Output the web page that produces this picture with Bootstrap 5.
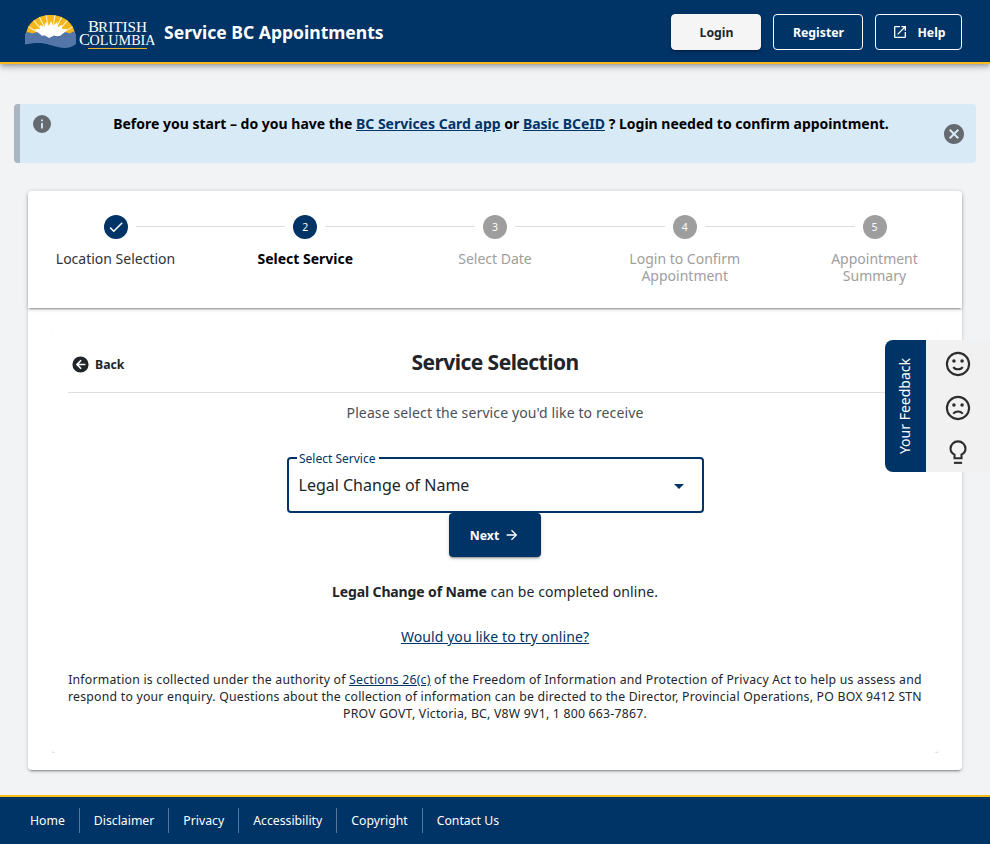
<!DOCTYPE html>
<html lang="en">
<head>
<meta charset="utf-8">
<meta name="viewport" content="width=device-width, initial-scale=1">
<title>Service BC Appointments</title>
<link rel="stylesheet" href="https://cdn.jsdelivr.net/npm/bootstrap@5.3.0/dist/css/bootstrap.min.css">
<style>
:root{--navy:#003366;--gold:#fcba19}
body{font-family:"Noto Sans",sans-serif;background:#f1f3f5;color:#212529;min-height:844px;font-size:14px}
svg{display:block;flex:none}
.top-bar{height:64px;background:var(--navy);border-bottom:2px solid var(--gold);box-shadow:0 2px 4px -1px rgba(0,0,0,.2),0 4px 5px rgba(0,0,0,.14),0 1px 10px rgba(0,0,0,.12);padding:2px 28px 0 25px}
.app-name{font-size:17.55px;font-weight:700;line-height:24px;color:#fff;white-space:nowrap;margin-left:9px}
.top-actions{gap:12px}
.top-btn{height:36px;font-size:12.25px;font-weight:700;border-radius:4px;padding:1px 0 0 1px;display:flex;align-items:center;justify-content:center;color:#fff;border:1px solid #fff;width:90px;line-height:18px}
.top-btn:hover{color:#fff}
.btn-login{background:#f5f5f5;color:#212529;border-color:#f5f5f5;box-shadow:0 3px 1px -2px rgba(0,0,0,.2),0 2px 2px rgba(0,0,0,.14),0 1px 5px rgba(0,0,0,.12)}
.btn-help{width:87px}
.btn-help svg{margin:-1px 9px 0 0}
.notice{margin:40px 14px 0;height:59px;background:#d9eaf7;border:0;border-left:6px solid #a9b5c1;border-radius:4px;padding:10px 12px 0 13px;color:#000;font-weight:700}
.notice-text{line-height:20px;font-size:14px;white-space:nowrap;text-align:center;padding-left:7px}
.info-icon{margin-top:1px}
.close-icon{margin-top:10px}
a,.notice a{color:var(--navy)}
.main-card{margin:28px 28px 0;height:579px;border:0;border-radius:4px;background:#fff;box-shadow:0 3px 1px -2px rgba(0,0,0,.2),0 2px 2px rgba(0,0,0,.14),0 1px 5px rgba(0,0,0,.12)}
.steps{height:117px;flex:none;border-radius:4px 4px 0 0;box-shadow:0 3px 1px -2px rgba(0,0,0,.2),0 2px 2px rgba(0,0,0,.14),0 1px 5px rgba(0,0,0,.12)}
.step{width:175px;padding-top:24px;flex:none;color:#9e9e9e;text-align:center}
.step-dot{width:24px;height:24px;border-radius:50%;background:#9e9e9e;color:#fff;font-size:10.5px;line-height:24px}
.step.done .step-dot,.step.active .step-dot{background:var(--navy)}
.step-label{margin-top:11px;line-height:17px;font-size:14px}
.step.done{color:#303336}
.step.active{color:#000}
.step.active .step-label{font-weight:700}
.step-line{height:1px;background:#dedede;margin:35px -67.5px 0;flex:1 1 0}
.pane{margin:24px 24px 0;height:422px;overflow:hidden}
.inner{height:421px;border-radius:4px;padding:8px 16px 0;box-shadow:0 3px 1px -2px rgba(0,0,0,.2),0 2px 2px rgba(0,0,0,.14),0 1px 5px rgba(0,0,0,.12)}
.pane{height:421px}
.title-row{height:53px;border-bottom:1px solid #dedede;display:grid;grid-template-columns:1fr auto 1fr;align-items:start;padding-top:8px}
.back-link{font-weight:700;font-size:12.25px;line-height:18px;padding:8px 0 0 4px;gap:6px;color:#212529;text-decoration:none}
.back-link svg{margin-top:-1px}
.title-row h1{font-size:21px;font-weight:700;line-height:28px;margin:0;letter-spacing:-.55px}
.subtitle{font-size:14px;line-height:20px;color:#495057;margin-top:10px;letter-spacing:.125px}
.pick{width:417px;height:56px;margin:34px auto 0;border:2px solid var(--navy);border-radius:4px;position:relative;padding:0 14.5px 0 10px}
.pick-label{position:absolute;left:8px;top:-8px;background:#fff;color:var(--navy);font-size:12px;line-height:16px;padding:0 3.5px 0 2.5px;white-space:nowrap}
.pick-value{font-size:16px;line-height:24px;color:#212529}
.pick-arrow{margin-top:1px}
.btn-next{width:92px;height:44px;background:var(--navy);color:#fff;font-weight:700;font-size:12.25px;border-radius:4px;gap:5px;padding:2px 0 0;box-shadow:0 3px 1px -2px rgba(0,0,0,.2),0 2px 2px rgba(0,0,0,.14),0 1px 5px rgba(0,0,0,.12)}
.btn-next svg{margin-top:-1.500px}
.online{margin-top:25px;line-height:20px;letter-spacing:.09px}
.online b{letter-spacing:-.12px}
.try-link{margin-top:25px;line-height:20px;letter-spacing:.09px}
.legal{margin-top:24px;font-size:12.25px;line-height:17px;white-space:nowrap;letter-spacing:.23px}
.foot{height:49px;margin-top:25px;background:var(--navy);border-top:2px solid var(--gold);padding:11px 0 0 16px}
.foot a{color:#fff;font-size:12.25px;line-height:25px;height:25px;padding:0 14px;text-decoration:none;border-right:1px solid #557799;white-space:nowrap}
.foot a:last-child{border:0}
.feedback{position:absolute;top:340px;right:0;width:105.5px;height:132px}
.feedback-tab{width:41px;background:var(--navy);color:#fff;border-radius:8px 0 0 8px;font-size:14px}
.feedback-tab span{writing-mode:vertical-rl;transform:rotate(180deg);white-space:nowrap;line-height:20px}
.feedback-icons{background:#f1f1f1;color:#2d2d2d;padding-top:10px;gap:16px}
</style>
<script src="https://cdn.jsdelivr.net/npm/bootstrap@5.3.0/dist/js/bootstrap.bundle.min.js"></script>
</head>
<body>
<header class="top-bar d-flex align-items-center">
  <svg width="130" height="36" viewBox="0 0 130 36" aria-label="British Columbia">
    <defs><clipPath id="sun"><path d="M1 22C2-6 49-6 50 22Z"/></clipPath></defs>
    <g clip-path="url(#sun)">
      <rect width="51" height="24" fill="#f3b71b"/>
      <g stroke="#fff3c4" stroke-width="1.1">
        <path d="M25.500 26L-4 18M25.500 26L-3 9M25.500 26L3 0M25.500 26L11-4M25.500 26L20-5M25.500 26L31-5M25.500 26L40-4M25.500 26L48 0M25.500 26L54 9M25.500 26L55 18"/>
      </g>
      <path d="M9 22L12 18L10 15L15 15L15 11L19 13L21 8L24 12L26 7L28 12L32 8L33 13L37 11L37 15L42 15L40 18L43 22Z" fill="#fff"/>
    </g>
    <path d="M0 20L3 18L7 19.500L12 18L17 21.500L20 20L24 23L28 20L33 23.500L40 18L45 19.500L48 17.500L51 20V30C44 36 35 34 25 31C16 28 8 29 0 30.500Z" fill="#5475a7"/>
    <path d="M16 21.500L19 18L21 18L25 22L29 18L34 23L29 21.500L24 24L20 21.500Z" fill="#fff"/>
    <g fill="#fff" font-family="Liberation Serif,serif">
      <text x="63" y="17.800" font-size="16.500">B</text>
      <text x="73" y="17.800" font-size="13.800" textLength="49" lengthAdjust="spacingAndGlyphs">RITISH</text>
      <text x="54" y="30.800" font-size="16.500">C</text>
      <text x="64.500" y="30.800" font-size="13.800" textLength="66" lengthAdjust="spacingAndGlyphs">OLUMBIA</text>
    </g>
    <rect x="63" y="34" width="59" height="1" fill="#e9b021"/>
  </svg>
  <div class="app-name">Service BC Appointments</div>
  <div class="top-actions d-flex ms-auto">
    <a href="#" class="btn top-btn btn-login">Login</a>
    <a href="#" class="btn top-btn">Register</a>
    <a href="#" class="btn top-btn btn-help"><svg width="16" height="16" viewBox="0 0 24 24" fill="#fff"><path d="M14 3v2h3.590l-9.830 9.830 1.410 1.410L19 6.410V10h2V3m-2 16H5V5h7V3H5a2 2 0 0 0-2 2v14a2 2 0 0 0 2 2h14a2 2 0 0 0 2-2v-7h-2v7z"/></svg><span>Help</span></a>
  </div>
</header>

<div class="notice d-flex align-items-start" role="alert">
  <svg class="info-icon" width="18" height="18" viewBox="2 2 20 20" fill="#646a70"><path d="M13 9h-2V7h2m0 10h-2v-6h2m-1-9A10 10 0 0 0 2 12a10 10 0 0 0 10 10 10 10 0 0 0 10-10A10 10 0 0 0 12 2z"/></svg>
  <div class="notice-text flex-grow-1">Before you start – do you have the <a href="#">BC Services Card app</a> or <a href="#">Basic BCeID</a> ? Login needed to confirm appointment.</div>
  <svg class="close-icon" width="20" height="20" viewBox="2 2 20 20" fill="#646a70"><path d="M12 2c5.530 0 10 4.470 10 10s-4.470 10-10 10S2 17.530 2 12 6.470 2 12 2m3.590 5L12 10.590 8.410 7 7 8.410 10.590 12 7 15.590 8.410 17 12 13.410 15.590 17 17 15.590 13.410 12 17 8.410 15.590 7z"/></svg>
</div>

<main class="main-card card">
  <div class="steps d-flex">
    <div class="step done"><div class="step-dot mx-auto d-flex align-items-center justify-content-center"><svg width="18" height="18" viewBox="0 0 24 24" fill="#fff"><path d="M21 7L9 19l-5.500-5.500 1.410-1.410L9 16.170 19.590 5.590 21 7z"/></svg></div><div class="step-label">Location Selection</div></div>
    <div class="step-line"></div>
    <div class="step active"><div class="step-dot mx-auto">2</div><div class="step-label">Select Service</div></div>
    <div class="step-line"></div>
    <div class="step"><div class="step-dot mx-auto">3</div><div class="step-label">Select Date</div></div>
    <div class="step-line"></div>
    <div class="step"><div class="step-dot mx-auto">4</div><div class="step-label">Login to Confirm<br>Appointment</div></div>
    <div class="step-line"></div>
    <div class="step"><div class="step-dot mx-auto">5</div><div class="step-label">Appointment<br>Summary</div></div>
  </div>
  <div class="pane">
  <div class="inner text-center">
    <div class="title-row">
      <a href="#" class="back-link d-flex align-items-center"><svg width="17" height="17" viewBox="1.500 1.500 21 21" fill="#212529"><path d="M2 12A10 10 0 0 1 12 2a10 10 0 0 1 10 10 10 10 0 0 1-10 10A10 10 0 0 1 2 12m16-1h-8l3.500-3.500-1.420-1.420L6.160 12l5.920 5.920 1.420-1.420L10 13h8v-2z"/></svg>Back</a>
      <h1>Service Selection</h1>
    </div>
    <div class="subtitle">Please select the service you'd like to receive</div>
    <div class="pick d-flex align-items-center justify-content-between">
      <span class="pick-label">Select Service</span>
      <span class="pick-value">Legal Change of Name</span>
      <svg class="pick-arrow" width="16" height="24" viewBox="4 0 16 24" fill="#003366"><path d="M7 10l5 5 5-5H7z"/></svg>
    </div>
    <button type="button" class="btn btn-next d-flex align-items-center justify-content-center mx-auto">Next<svg width="16" height="16" viewBox="0 0 24 24" fill="#fff"><path d="M4 11v2h12l-5.500 5.500 1.420 1.420L19.840 12l-7.920-7.920L10.500 5.500 16 11H4z"/></svg></button>
    <div class="online"><b>Legal Change of Name</b> can be completed online.</div>
    <div class="try-link"><a href="#">Would you like to try online?</a></div>
    <div class="legal">Information is collected under the authority of <a href="#">Sections 26(c)</a> of the Freedom of Information and Protection of Privacy Act to help us assess and<br>respond to your enquiry. Questions about the collection of information can be directed to the Director, Provincial Operations, PO BOX 9412 STN<br>PROV GOVT, Victoria, BC, V8W 9V1, 1 800 663-7867.</div>
  </div>
  </div>
</main>

<footer class="foot d-flex align-items-start">
  <a href="#">Home</a><a href="#">Disclaimer</a><a href="#">Privacy</a><a href="#">Accessibility</a><a href="#">Copyright</a><a href="#">Contact Us</a>
</footer>

<aside class="feedback d-flex">
  <div class="feedback-tab d-flex align-items-center justify-content-center"><span>Your Feedback</span></div>
  <div class="feedback-icons flex-grow-1 d-flex flex-column align-items-center">
    <svg width="28" height="28" viewBox="0 0 24 24" fill="none" stroke="currentColor" stroke-width="1.800"><circle cx="12" cy="12" r="9.500"/><path d="M8 14.500C9.500 17.200 14.500 17.200 16 14.500"/><circle cx="8.500" cy="9.500" r="1.500" fill="currentColor" stroke="none"/><circle cx="15.500" cy="9.500" r="1.500" fill="currentColor" stroke="none"/></svg>
    <svg width="28" height="28" viewBox="0 0 24 24" fill="none" stroke="currentColor" stroke-width="1.800"><circle cx="12" cy="12" r="9.500"/><path d="M8 17C9.500 14.300 14.500 14.300 16 17"/><circle cx="8.500" cy="9.500" r="1.500" fill="currentColor" stroke="none"/><circle cx="15.500" cy="9.500" r="1.500" fill="currentColor" stroke="none"/></svg>
    <svg width="28" height="28" viewBox="0 0 24 24" fill="none" stroke="currentColor" stroke-width="1.800"><path d="M9 17.300V14.300C6.500 13 5.600 11.300 5.600 9.300a6.400 6.400 0 0 1 12.800 0C18.400 11.300 17.500 13 15 14.300V17.300Z"/><path d="M8.500 21.300H15.500"/></svg>
  </div>
</aside>
</body>
</html>
